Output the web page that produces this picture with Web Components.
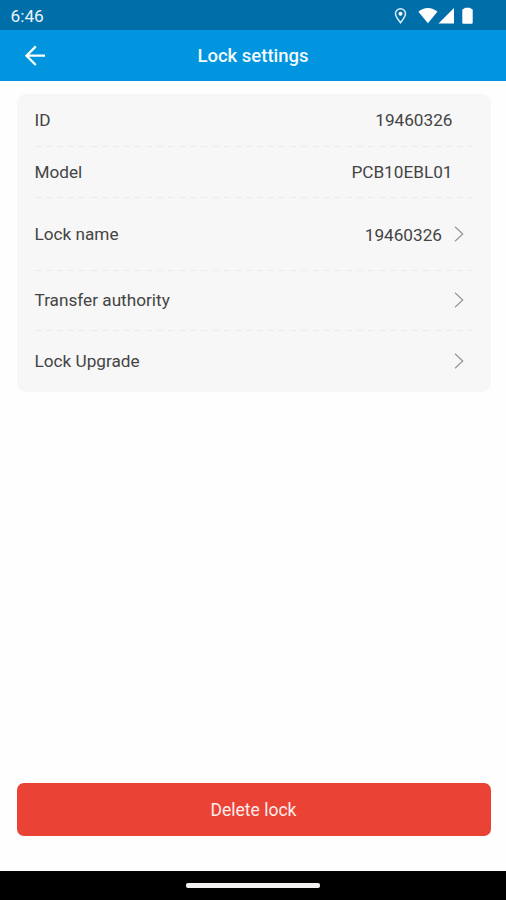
<!DOCTYPE html>
<html lang="en">
<head>
<meta charset="utf-8">
<title>Lock settings</title>
<style>
html,body{margin:0;height:100%;background:#fefefe}
body{font-family:Roboto,"Liberation Sans",sans-serif;color:#444}
</style>
</head>
<body>
<lock-screen></lock-screen>
<script>
const define = (name, html) => {
  const template = document.createElement('template');
  template.innerHTML = html;
  customElements.define(name, class extends HTMLElement {
    constructor() {
      super();
      this.attachShadow({mode: 'open'}).append(template.content.cloneNode(true));
    }
  });
};

define('status-bar', `<style>
:host{display:flex;box-sizing:border-box;height:30px;padding:1px 32px 0 10.500px;background:#006ea8;color:#eaf5fb;align-items:center;justify-content:space-between;font-size:17.300px;line-height:20px}
svg{display:block}
</style><span><slot></slot></span>
<svg width="80" height="20" viewBox="394 5.500 80 20" fill="#fff">
<path d="M400.500 22.200c-2.800-3.500-5-6.200-5-8.900a5 5 0 0 1 10 0c0 2.700-2.200 5.400-5 8.900z" fill="none" stroke="#d9ebf5" stroke-width="1.500"/>
<circle cx="400.500" cy="13.300" r="2"/>
<path d="M418.400 11.200C423.500 6.100 432.300 6.100 437.400 11.200L427.900 22.700z"/>
<path d="M438.500 23L454 7.400V23z"/>
<path d="M463.300 8.500L465.200 7.200h4.600L471.700 8.500q1 0 1 1v12.800q0 1-1 1h-8.400q-1 0-1-1V9.500q0-1 1-1z"/>
</svg>`);

define('app-bar', `<style>
:host{display:grid;grid-template-columns:70px 1fr 70px;height:51px;background:#0095de;color:#f3faff;align-items:center;font-size:18.500px;font-weight:500;text-align:center}
svg{display:block;margin-left:24px}
</style>
<svg width="22" height="22" viewBox="0 0 22 22" fill="none" stroke="#fff" stroke-width="2.300"><path d="M21 10.700H3M11.800 1.400L2.500 10.700l9.300 9.300"/></svg>
<slot></slot>`);

define('settings-card', `<style>
:host{display:block;box-sizing:border-box;width:474px;height:298px;margin:13px 0 0 17px;border-radius:9px;background:#f7f7f7;overflow:hidden}
</style><slot></slot>`);

define('settings-row', `<style>
:host{display:flex;box-sizing:border-box;height:var(--h,60px);padding-bottom:1.500px;margin:0 18px 0 17.500px;font-size:17.200px;line-height:20px;align-items:center;justify-content:space-between;background:repeating-linear-gradient(90deg,#ebebeb 0 6px,transparent 6px 11.100px) left bottom/100% 1px no-repeat}
:host(:last-child){background:none}
.end{display:flex;align-items:center;gap:12px;padding-right:20.500px}
:host([link]) .end{padding-right:9px}
::slotted([slot=value]){padding-top:var(--drop,0)}
svg{display:none}
:host([link]) svg{display:block}
</style><span><slot></slot></span>
<div class="end"><slot name="value"></slot>
<svg width="10" height="16" viewBox="0 0 10 16" fill="none" stroke="#999" stroke-width="1.300"><path d="M1 .800L8.700 8 1 15.200"/></svg></div>`);

define('delete-button', `<style>
:host{display:block;margin:391px 15.500px 0 16.500px}
button{display:block;width:100%;height:53px;padding:1px 0 0;border:0;border-radius:7px;background:#ea4335;color:#ffeceb;font:17.500px/52px Roboto,"Liberation Sans",sans-serif}
</style><button><slot></slot></button>`);

define('nav-bar', `<style>
:host{display:flex;height:29px;margin-top:auto;background:#000;align-items:center;justify-content:center}
i{width:134px;height:5px;border-radius:2px;background:#f2f0f0}
</style><i></i>`);

define('lock-screen', `<style>
:host{display:flex;flex-direction:column;height:900px;width:506px;overflow:hidden}
status-bar,app-bar,settings-card,delete-button,nav-bar{flex-shrink:0}
</style>
<status-bar>6:46</status-bar>
<app-bar>Lock settings</app-bar>
<settings-card>
<settings-row style="--h:53px">ID<span slot="value">19460326</span></settings-row>
<settings-row style="--h:51px">Model<span slot="value">PCB10EBL01</span></settings-row>
<settings-row link style="--h:73px;--drop:2px">Lock name<span slot="value">19460326</span></settings-row>
<settings-row link style="--h:60px">Transfer authority</settings-row>
<settings-row link style="--h:61px">Lock Upgrade</settings-row>
</settings-card>
<delete-button>Delete lock</delete-button>
<nav-bar></nav-bar>`);
</script>
</body>
</html>
